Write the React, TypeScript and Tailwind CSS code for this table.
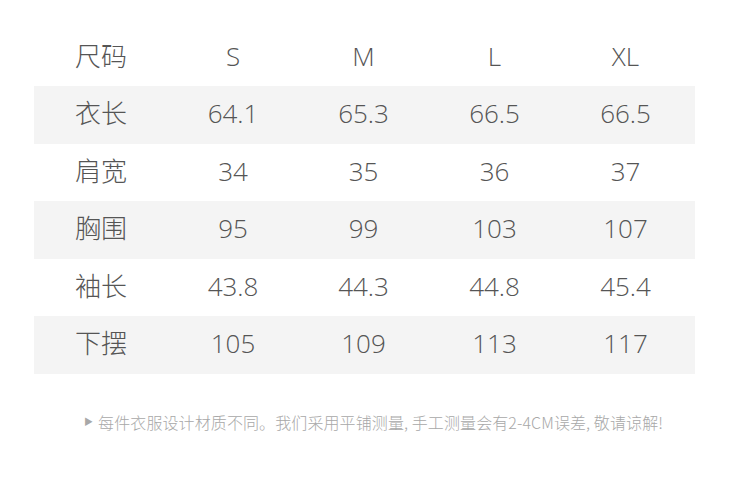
const sizes = ["S", "M", "L", "XL"];

const rows: { label: string; values: string[] }[] = [
  { label: "衣长", values: ["64.1", "65.3", "66.5", "66.5"] },
  { label: "肩宽", values: ["34", "35", "36", "37"] },
  { label: "胸围", values: ["95", "99", "103", "107"] },
  { label: "袖长", values: ["43.8", "44.3", "44.8", "45.4"] },
  { label: "下摆", values: ["105", "109", "113", "117"] },
];

function Row({ label, values, shaded }: { label: string; values: string[]; shaded?: boolean }) {
  return (
    <div
      className={`grid h-[57.5px] grid-cols-[134px_130px_131px_131px_131px] items-center pb-[3px] text-center ${
        shaded ? "bg-[#f4f4f4]" : ""
      }`}
    >
      <div>{label}</div>
      {values.map((v, i) => (
        <div key={i}>{v}</div>
      ))}
    </div>
  );
}

export default function App() {
  return (
    <div
      className="h-[491px] w-[750px] bg-white pt-[28.5px]"
      style={{ fontFamily: '"Open Sans", "Noto Sans CJK SC", sans-serif' }}
    >
      {/* size table */}
      <div className="ml-[34px] w-[661px] text-[26px] font-light leading-none text-[#555555]">
        <Row label="尺码" values={sizes} />
        {rows.map((r, i) => (
          <Row key={r.label} label={r.label} values={r.values} shaded={i % 2 === 0} />
        ))}
      </div>

      {/* note */}
      <div className="mt-[40px] flex items-center pl-[84px] text-[16px] font-light leading-none tracking-[0.1px] text-[#a8a8a8]">
        <span className="mr-[5px] text-[9px]">▶</span>
        <span style={{ fontFamily: '"Noto Sans CJK SC", sans-serif' }}>
          每件衣服设计材质不同。我们采用平铺测量, 手工测量会有2-4CM误差, 敬请谅解!
        </span>
      </div>
    </div>
  );
}
